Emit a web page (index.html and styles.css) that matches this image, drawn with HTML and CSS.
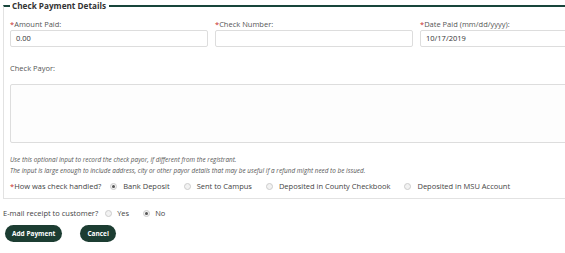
FILE: index.html
```html
<!DOCTYPE html>
<html lang="en">
<head>
    <meta charset="UTF-8">
    <title>Check Payment</title>
    <link rel="stylesheet" href="styles.css">
</head>
<body>
    <form class="payment-form">
        <fieldset class="check-box">
            <legend>Check Payment Details</legend>

            <div class="row-three">
                <div class="field">
                    <label><span class="req">*</span>Amount Paid:</label>
                    <div class="input">0.00</div>
                </div>
                <div class="field">
                    <label><span class="req">*</span>Check Number:</label>
                    <div class="input"></div>
                </div>
                <div class="field">
                    <label><span class="req">*</span>Date Paid (mm/dd/yyyy):</label>
                    <div class="input">10/17/2019</div>
                </div>
            </div>

            <label class="payor-label">Check Payor:</label>
            <div class="textarea"></div>

            <p class="help">Use this optional input to record the check payor, if different from the registrant.</p>
            <p class="help">The input is large enough to include address, city or other payor details that may be useful if a refund might need to be issued.</p>

            <div class="radio-row">
                <span class="question"><span class="req">*</span>How was check handled?</span>
                <span class="opt"><span class="radio checked"></span>Bank Deposit</span>
                <span class="opt"><span class="radio"></span>Sent to Campus</span>
                <span class="opt"><span class="radio"></span>Deposited in County Checkbook</span>
                <span class="opt"><span class="radio"></span>Deposited in MSU Account</span>
            </div>
        </fieldset>

        <div class="email-row">
            <span class="question">E-mail receipt to customer?</span>
            <span class="opt"><span class="radio"></span>Yes</span>
            <span class="opt"><span class="radio checked"></span>No</span>
        </div>

        <div class="buttons">
            <button type="button" class="btn">Add Payment</button>
            <button type="button" class="btn">Cancel</button>
        </div>
    </form>
</body>
</html>
```

FILE: styles.css
```css
* {
    margin: 0;
    padding: 0;
    box-sizing: border-box;
}

body {
    font-family: 'Open Sans', 'Liberation Sans', sans-serif;
    font-size: 7.5px;
    color: #444;
    background: #fff;
    width: 565px;
    height: 253px;
    overflow: hidden;
}

.payment-form {
    width: 565px;
    padding-left: 3px;
    overflow: hidden;
}

.check-box {
    width: 640px;
    border: 1px solid #e2e2e2;
    border-top: 2px solid #18453b;
    padding: 8px 6px 4px 6px;
    height: 199px;
}

.check-box legend {
    padding: 0 3px 0 2px;
    font-weight: bold;
    font-size: 8.2px;
    color: #333;
}

.req {
    color: #c62828;
}

.row-three {
    display: flex;
    gap: 7px;
}

.field {
    width: 198px;
    display: flex;
    flex-direction: column;
    gap: 1px;
}

.field:last-child {
    width: 200px;
}

.field label,
.payor-label {
    color: #555;
}

.input {
    height: 17px;
    border: 1px solid #ddd;
    border-radius: 2px;
    padding: 0 5px;
    line-height: 15px;
    color: #333;
}

.payor-label {
    display: block;
    margin-top: 16px;
}

.textarea {
    margin-top: 11px;
    height: 59px;
    border: 1px solid #ddd;
    border-radius: 2px;
    background: #fdfdfd;
}

.help {
    font-style: italic;
    font-size: 6.4px;
    color: #555;
    line-height: 11px;
}

.help:first-of-type {
    margin-top: 11px;
}

.radio-row,
.email-row {
    display: flex;
    align-items: center;
}

.radio-row {
    margin-top: 5px;
}

.question {
    margin-right: 9px;
    color: #444;
}

.opt {
    display: flex;
    align-items: center;
    margin-right: 14px;
    color: #444;
}

.radio {
    width: 7px;
    height: 7px;
    border: 1px solid #ccc;
    border-radius: 50%;
    background: #f2f2f2;
    margin-right: 6px;
    position: relative;
}

.radio.checked::after {
    content: '';
    position: absolute;
    left: 1px;
    top: 1px;
    width: 3px;
    height: 3px;
    border-radius: 50%;
    background: #555;
}

.email-row {
    margin-top: 9px;
}

.email-row .question {
    margin-right: 7px;
}

.email-row .opt {
    margin-right: 14px;
}

.email-row .radio {
    margin-right: 5px;
}

.buttons {
    display: flex;
    gap: 18px;
    margin-top: 7px;
    padding-left: 2px;
}

.btn {
    background: #1c3d32;
    color: #fff;
    border: none;
    border-radius: 9px;
    height: 17px;
    padding: 0 7px;
    font-family: inherit;
    font-size: 6.5px;
    font-weight: bold;
}
```
